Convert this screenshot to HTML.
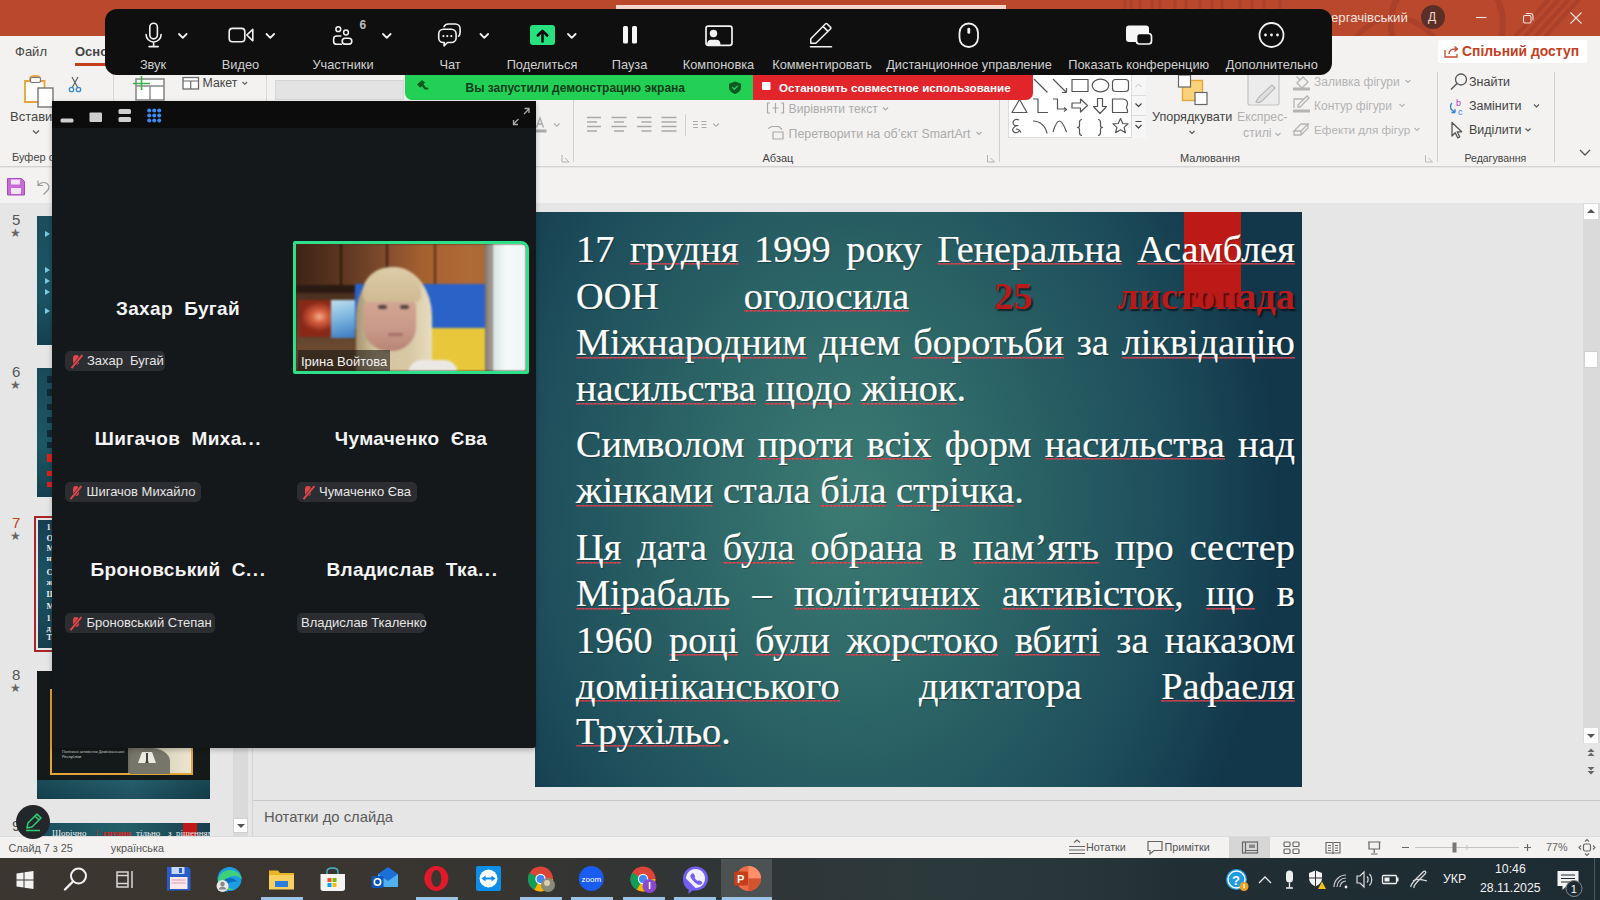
<!DOCTYPE html>
<html><head><meta charset="utf-8">
<style>
*{margin:0;padding:0;box-sizing:border-box}
html,body{width:1600px;height:900px;overflow:hidden;background:#e6e6e6;font-family:"Liberation Sans",sans-serif}
.a{position:absolute}
.t{position:absolute;white-space:pre;line-height:1}
svg{position:absolute;overflow:visible}

.sl{position:absolute;left:576px;width:719px;height:38px;font-family:"Liberation Serif",serif;font-size:38.3px;line-height:38px;color:#fff;white-space:pre;text-shadow:1px 1px 1px rgba(0,0,0,.35);-webkit-text-stroke:.22px #fff}
.sl.j{display:flex;justify-content:space-between}
.u{background:repeating-linear-gradient(90deg,#e0303c 0 2px,rgba(200,90,110,.75) 2px 4px) 0 33.5px/100% 1.6px no-repeat}
.sl span{display:inline-block;height:38px}
.r{color:#b81b1b;font-weight:bold;text-shadow:2px 2px 1.5px rgba(0,0,0,.6);-webkit-text-stroke:0}
.zl{position:absolute;top:58px;width:0;display:flex;justify-content:center;white-space:pre;font-size:12.8px;line-height:13px;color:#cfcfcf}
.bn{position:absolute;width:0;display:flex;justify-content:center;white-space:pre;font-size:19px;font-weight:bold;line-height:20px;color:#f4f4f4;letter-spacing:.35px}
.bn i{font-style:normal;letter-spacing:1.6px}
.pill{position:absolute;height:20px;border-radius:5px;background:#2b2d30;color:#e6e6e6;font-size:13px;line-height:20px;white-space:pre;padding-left:22px}
.mm{position:absolute;left:4px;top:3px;width:14px;height:14px}
.mm:before{content:"";position:absolute;left:4px;top:1px;width:6px;height:10px;border-radius:3px;background:#e0474c}
.mm:after{content:"";position:absolute;left:6.5px;top:-1px;width:1.6px;height:17px;background:#e0474c;transform:rotate(40deg);box-shadow:0 0 0 .6px #2b2d30}
.tn{position:absolute;left:12px;font-size:15px;line-height:15px;color:#555}
.st{position:absolute;left:10px;font-size:12px;line-height:12px;color:#666}
</style></head><body>
<!-- ============ TITLE BAR ============ -->
<div class="a" style="left:0;top:0;width:1600px;height:36px;background:#b9482d"></div>

<!-- ============ RIBBON ============ -->
<div class="a" style="left:0;top:36px;width:1600px;height:131px;background:#f3f2f1;border-bottom:1px solid #d4d3d2"></div>
<!-- QAT row -->
<div class="a" style="left:0;top:168px;width:1600px;height:35px;background:#f3f2f1"></div>

<!-- title decorations -->
<svg width="1600" height="36" style="left:0;top:0;overflow:hidden" fill="none" stroke="#ab412a" stroke-width="6">
 <circle cx="1447" cy="24" r="56"/>
 <circle cx="1395" cy="66" r="48" stroke-width="5"/>
 <path d="M1512 40l40-44M1522 40l40-44M1532 40l40-44M1542 40l40-44" stroke-width="4"/>
 <path d="M1125 0v36M1131 0v36M1140 0v36M1152 0v36M1160 0v36M1175 0v36M1186 0v36M1200 0v36M1212 0v36M1222 0v36M1240 0v36M1252 0v36M1264 0v36M1280 0v36" stroke-width="3"/>
</svg>
<div class="a" style="left:616px;top:5px;width:390px;height:4px;background:#f4d6cc"></div>
<div class="t" style="left:1331px;top:11px;font-size:13.2px;color:#f6e4de">ергачівський</div>
<div class="a" style="left:1421px;top:5px;width:24px;height:24px;border-radius:50%;background:#5c2f26"></div>
<div class="t" style="left:1428px;top:11px;font-size:12px;color:#efd9d2">Д</div>
<svg width="1600" height="36" style="left:0;top:0" fill="none" stroke="#f7e3dd" stroke-width="1.1">
 <path d="M1476 17.5h10.5"/>
 <rect x="1523.5" y="15.5" width="7.5" height="7.5" rx="1.5"/><path d="M1526 13.5h4.5c1.5 0 2.5 1 2.5 2.5v4.5"/>
 <path d="M1570.5 12.5l11 11M1581.5 12.5l-11 11"/>
</svg>
<!-- tabs -->
<div class="t" style="left:15px;top:45px;font-size:13px;color:#444">Файл</div>
<div class="t" style="left:75px;top:45px;font-size:13px;font-weight:bold;color:#444">Основне</div>
<div class="a" style="left:75px;top:63px;width:58px;height:2.5px;background:#c43e1c"></div>
<!-- share button -->
<div class="a" style="left:1438px;top:40px;width:149px;height:23px;background:#fff;border-radius:2px"></div>
<svg width="1600" height="80" style="left:0;top:0" fill="none" stroke="#c84a2e" stroke-width="1.3">
 <path d="M1445 50v7h12v-3M1449 54c0-3 2.5-5 6-5h2.5M1454.5 46.5l3 2.5-3 2.5"/>
</svg>
<div class="t" style="left:1462px;top:45px;font-size:13.9px;font-weight:bold;color:#c4401f">Спільний доступ</div>
<!-- separators -->
<div class="a" style="left:113px;top:72px;width:1px;height:90px;background:#d8d8d8"></div>
<div class="a" style="left:266px;top:72px;width:1px;height:90px;background:#d8d8d8"></div>
<div class="a" style="left:573px;top:100px;width:1px;height:62px;background:#d0d0d0"></div>
<div class="a" style="left:998.5px;top:100px;width:1px;height:62px;background:#d0d0d0"></div>
<div class="a" style="left:1437px;top:72px;width:1px;height:90px;background:#d0d0d0"></div>
<div class="a" style="left:1554px;top:72px;width:1px;height:90px;background:#d0d0d0"></div>
<div class="a" style="left:684.5px;top:114px;width:1px;height:22px;background:#d0d0d0"></div>
<!-- clipboard -->
<svg width="300" height="170" style="left:0;top:0">
 <path d="M25 81h5v-2.5c0-1.5 1.5-2.5 5-2.5s5 1 5 2.5V81h4.5v21H25z" fill="#fff" stroke="#e8a33a" stroke-width="1.8"/>
 <rect x="30.5" y="77.5" width="10" height="5" rx="1.5" fill="#fff" stroke="#777" stroke-width="1.2"/>
 <rect x="38" y="88" width="15" height="19" fill="#fff" stroke="#6a6a6a" stroke-width="1.3"/>
 <path d="M72 77l6 11M78 77l-6 11" stroke="#555" stroke-width="1.1"/>
 <circle cx="71.5" cy="89.5" r="2.2" fill="none" stroke="#3a8ad0" stroke-width="1.3"/><circle cx="78.5" cy="89.5" r="2.2" fill="none" stroke="#3a8ad0" stroke-width="1.3"/>
 <!-- new slide -->
 <rect x="136" y="79" width="28" height="21" fill="#fff" stroke="#8a8a8a" stroke-width="1.6"/>
 <path d="M136 86h28M150 86v14" stroke="#8a8a8a" stroke-width="1.4"/>
 <path d="M133 83.5h17M141.5 76v14" stroke="#3bb04a" stroke-width="1.6"/>
 <rect x="183" y="77.5" width="15.5" height="11.5" fill="#fff" stroke="#6a6a6a" stroke-width="1.3"/>
 <path d="M183 81h15.5M190.7 81v8" stroke="#6a6a6a" stroke-width="1.2"/>
 <path d="M242.5 82l2.3 2.3 2.3-2.3" stroke="#555" stroke-width="1.1" fill="none"/>
 <path d="M33 130.5l3 3 3-3" stroke="#555" stroke-width="1.2" fill="none"/>
</svg>
<div class="t" style="left:10px;top:110px;font-size:13px;color:#444">Вставити</div>
<div class="t" style="left:12px;top:152px;font-size:11px;color:#444">Буфер обміну</div>
<div class="t" style="left:202.5px;top:77px;font-size:12.3px;color:#444">Макет</div>
<div class="a" style="left:275px;top:80px;width:129px;height:20px;background:#e3e3e3;border:1px solid #d6d6d6"></div>
<!-- font / paragraph (disabled grey) -->
<svg width="1600" height="170" style="left:0;top:0" fill="none" stroke="#a9a9a9" stroke-width="1.6">
 <path d="M536.5 127.5l3.5-9.5 3.5 9.5M537.8 124h4.5" stroke-width="1.3"/>
 <rect x="536" y="129.5" width="10.5" height="3" fill="#a9a9a9" stroke="none"/>
 <path d="M554 123.5l2.8 2.8 2.8-2.8" stroke-width="1.1"/>
 <path d="M562 155v7h7M565 158l4 4" stroke-width=".9"/>
 <path d="M587 117.5h14M587 122h10M587 126.5h14M587 131h10"/>
 <path d="M611.5 117.5h15M614 122h10M611.5 126.5h15M614 131h10"/>
 <path d="M637 117.5h14.5M641.5 122h10M637 126.5h14.5M641.5 131h10"/>
 <path d="M661.5 117.5h15M661.5 122h15M661.5 126.5h15M661.5 131h15"/>
 <path d="M693 121.5h5M693 124.5h5M693 127.5h5M701.5 121.5h5M701.5 124.5h5M701.5 127.5h5" stroke-width="1.1"/>
 <path d="M713.3 123.5l2.8 2.8 2.8-2.8" stroke-width="1.1"/>
 <path d="M770 103h-2.5v10h2.5M781 103h2.5v10H781M775.5 103v10M772.5 108h6" stroke-width="1.2"/>
 <path d="M883 107.5l2.5 2.5 2.5-2.5" stroke-width="1.1"/>
 <path d="M768 128.5l4-2h7l3 3M773 132h10v7h-10z" stroke-width="1.2"/>
 <path d="M976.5 132l2.5 2.5 2.5-2.5" stroke-width="1.1"/>
 <path d="M987.5 155v7h7M990.5 158l4 4" stroke-width=".9"/>
</svg>
<div class="t" style="left:788.5px;top:103px;font-size:12.2px;color:#ababab">Вирівняти текст</div>
<div class="t" style="left:788.5px;top:128px;font-size:12.4px;color:#ababab">Перетворити на об’єкт SmartArt</div>
<div class="t" style="left:762.5px;top:153px;font-size:11px;color:#444">Абзац</div>
<!-- shapes gallery -->
<div class="a" style="left:1008px;top:72px;width:138px;height:66px;background:#fff;border:1px solid #dcdcdc"></div>
<div class="a" style="left:1131px;top:72px;width:15px;height:66px;background:#f6f6f6;border-left:1px solid #dcdcdc"></div>
<div class="a" style="left:1131px;top:94.5px;width:15px;height:1px;background:#dcdcdc"></div>
<div class="a" style="left:1131px;top:114.5px;width:15px;height:1px;background:#dcdcdc"></div>
<svg width="1600" height="170" style="left:0;top:0" fill="none" stroke="#555" stroke-width="1.2" stroke-linejoin="round">
 <path d="M1034 79l13.5 13.5M1053 79l13 13M1066.5 92.5v-4.5M1066.5 92.5h-4.5"/>
 <rect x="1072" y="79.5" width="16" height="12"/>
 <ellipse cx="1100.5" cy="85.5" rx="8.3" ry="6.3"/>
 <rect x="1112.5" y="79.5" width="16" height="12" rx="3"/>
 <path d="M1012 112.5l7.5-13 7.5 13z"/>
 <path d="M1033 99h5v13.5h10M1053 99h4.5v10h9M1064 107.5l2.5 2-2.5 2"/>
 <path d="M1072 103h8.5v-4l7 6.5-7 6.5v-4h-8.5z"/>
 <path d="M1097.5 98.5h5v8h4l-6.5 7-6.5-7h4z"/>
 <path d="M1112.5 99h9.5c3.5 0 5.5 2 5.5 4.5 0 2-1 3-1 4 0 1 1 2 1 3v2h-15z"/>
 <path d="M1019 120c-3-1.5-6 0-6 3 0 2 2 3 5 2.5-4 1-6 3-5 5.5 1 2.5 5 2 7-.5M1016 129c2 0 4 1 5 3.5"/>
 <path d="M1033 121c7 0 13 5.5 14 12.5"/>
 <path d="M1053 132c2-7 4-11 6.5-11s4.5 4 7 11"/>
 <path d="M1082 119.5c-2 0-2.5 1-2.5 3v3c0 1.2-.8 2-2 2 1.2 0 2 .8 2 2v3c0 2 .5 3 2.5 3"/>
 <path d="M1098 119.5c2 0 2.5 1 2.5 3v3c0 1.2.8 2 2 2-1.2 0-2 .8-2 2v3c0 2-.5 3-2.5 3"/>
 <path d="M1120.5 118.5l2.3 5 5.3.4-4 3.5 1.3 5.3-4.9-2.9-4.9 2.9 1.3-5.3-4-3.5 5.3-.4z"/>
 <path d="M1135.5 87l3-3 3 3" stroke="#c0c0c0" stroke-width="1"/>
 <path d="M1135.5 103.5l3 3 3-3M1135.5 121.5h6M1135.5 125l3 3 3-3" stroke="#444" stroke-width="1.2"/>
</svg>
<!-- arrange -->
<svg width="1600" height="170" style="left:0;top:0">
 <rect x="1182.5" y="80.5" width="20" height="20" fill="#fbd27a" stroke="#e5a43c" stroke-width="1.4"/>
 <rect x="1178.5" y="75" width="12" height="12" fill="#fff" stroke="#666" stroke-width="1.2"/>
 <rect x="1195" y="92.5" width="12" height="12" fill="#fff" stroke="#666" stroke-width="1.2"/>
 <path d="M1189.5 131l2.5 2.5 2.5-2.5" stroke="#555" stroke-width="1.1" fill="none"/>
 <rect x="1248" y="72" width="31" height="33" rx="2" fill="#ececec" stroke="#c4c4c4" stroke-width="1.2"/>
 <path d="M1275 88l-12 12c-2 2-5 3-7 2 1-2 2-4 4-6l12-11z" fill="#e0e0e0" stroke="#b8b8b8" stroke-width="1.2"/>
 <path d="M1275.5 133l2.5 2.5 2.5-2.5" stroke="#b0b0b0" stroke-width="1.1" fill="none"/>
</svg>
<div class="t" style="left:1152px;top:111px;font-size:12.6px;color:#444">Упорядкувати</div>
<div class="t" style="left:1237px;top:111px;font-size:12.3px;color:#b0b0b0">Експрес-</div>
<div class="t" style="left:1243px;top:127px;font-size:12.3px;color:#b0b0b0">стилі</div>
<div class="t" style="left:1180px;top:153px;font-size:11px;color:#444">Малювання</div>
<!-- shape fill etc -->
<svg width="1600" height="170" style="left:0;top:0" fill="none" stroke="#b4b4b4" stroke-width="1.3">
 <path d="M1297 83l6-6 5 5-6 6zM1300 80l-3.5-3.5"/>
 <rect x="1293" y="87.5" width="17" height="3" fill="#b4b4b4" stroke="none"/>
 <path d="M1294 108v-9h10M1298 105l9-9 2 2-9 9h-2z"/>
 <rect x="1293" y="109.5" width="17" height="3" fill="#b4b4b4" stroke="none"/>
 <path d="M1294 131l7-7h7l-7 7zM1294 131v4h7l7-7v-4M1301 131v4"/>
 <path d="M1405.5 80l2.5 2.5 2.5-2.5M1399.5 104l2.5 2.5 2.5-2.5M1414.5 128l2.5 2.5 2.5-2.5" stroke-width="1.1"/>
 <path d="M1425.5 155v7h7M1428.5 158l4 4" stroke-width=".9"/>
</svg>
<div class="t" style="left:1314px;top:76px;font-size:12px;color:#b4b4b4">Заливка фігури</div>
<div class="t" style="left:1314px;top:100px;font-size:12px;color:#b4b4b4">Контур фігури</div>
<div class="t" style="left:1314px;top:124px;font-size:11.7px;color:#b4b4b4">Ефекти для фігур</div>
<!-- editing -->
<svg width="1600" height="170" style="left:0;top:0" fill="none" stroke-width="1.3">
 <circle cx="1461" cy="79.5" r="5.5" stroke="#555"/><path d="M1457 83.5l-6 6" stroke="#555" stroke-width="1.5"/>
 <path d="M1452 103c-2 2-2 5 0 7l3 2.5M1455 112.5h-3.5M1455 112.5v-3.5" stroke="#2c7fd0"/>
 <text x="1456" y="106" font-size="9" fill="#b43fc0" stroke="none" font-family="Liberation Sans">b</text>
 <text x="1458" y="115" font-size="9" fill="#2c7fd0" stroke="none" font-family="Liberation Sans">c</text>
 <path d="M1452 122.5v13.5l3.2-3.2 2.5 5 2-1-2.5-5h4.5z" stroke="#555" stroke-linejoin="round"/>
 <path d="M1534 104.5l2.5 2.5 2.5-2.5M1525.5 128.5l2.5 2.5 2.5-2.5" stroke="#555" stroke-width="1.1"/>
 <path d="M1580 150l5 5 5-5" stroke="#555" stroke-width="1.3"/>
</svg>
<div class="t" style="left:1469px;top:76px;font-size:12.5px;color:#444">Знайти</div>
<div class="t" style="left:1469px;top:100px;font-size:12.5px;color:#444">Замінити</div>
<div class="t" style="left:1469px;top:124px;font-size:12.5px;color:#444">Виділити</div>
<div class="t" style="left:1464.5px;top:153px;font-size:10.5px;color:#444">Редагування</div>
<!-- QAT -->
<svg width="300" height="210" style="left:0;top:0">
 <path d="M7.5 178.5h14l3 3v13.5h-17z" fill="#c86bd8" stroke="#a84cc0" stroke-width="1"/>
 <rect x="11" y="179.5" width="9" height="5" fill="#f4e4f8"/>
 <rect x="11" y="188" width="10" height="6" fill="#f4e4f8"/>
 <path d="M38 180.5v5h5M38.5 185c2.5-3 7-3.5 9.5-.5 1.5 2 1 4.5-1 6.5l-3.5 3.5" stroke="#999" stroke-width="1.2" fill="none"/>
</svg>
<!-- thumbnails panel -->
<div class="a" style="left:0;top:203px;width:252px;height:633px;background:#e6e6e6;overflow:hidden">
 <div class="a" style="left:233px;top:0;width:15px;height:633px;background:#dadada"></div>
 <div class="a" style="left:233px;top:615px;width:15px;height:15px;background:#fff;border:1px solid #d0d0d0"></div>
 <div class="a" style="left:237px;top:621px;width:0;height:0;border-left:4px solid transparent;border-right:4px solid transparent;border-top:4px solid #555"></div>
 <div class="tn" style="top:9px">5</div><div class="st" style="top:24px">★</div>
 <div class="a" style="left:37px;top:13px;width:173px;height:129px;background:linear-gradient(180deg,#1b4d5e,#1a5565 60%,#164050)"></div>
 <div class="a" style="left:45px;top:28px;border-left:5px solid #7ec8e0;border-top:3px solid transparent;border-bottom:3px solid transparent"></div>
 <div class="a" style="left:45px;top:64px;border-left:5px solid #7ec8e0;border-top:3px solid transparent;border-bottom:3px solid transparent"></div>
 <div class="a" style="left:45px;top:75px;border-left:5px solid #7ec8e0;border-top:3px solid transparent;border-bottom:3px solid transparent"></div>
 <div class="a" style="left:45px;top:86px;border-left:5px solid #7ec8e0;border-top:3px solid transparent;border-bottom:3px solid transparent"></div>
 <div class="a" style="left:45px;top:105px;border-left:5px solid #7ec8e0;border-top:3px solid transparent;border-bottom:3px solid transparent"></div>
 <div class="tn" style="top:161px">6</div><div class="st" style="top:176px">★</div>
 <div class="a" style="left:37px;top:165px;width:173px;height:129px;background:linear-gradient(180deg,#1a4a5a,#1c5664 60%,#153f4e)"></div>
 <div class="a" style="left:47px;top:251px;width:5px;height:8px;background:#e02020"></div>
 <div class="a" style="left:47px;top:268px;width:5px;height:5px;background:#e02020"></div>
 <div class="a" style="left:47px;top:279px;width:5px;height:5px;background:#e02020"></div>
 <div class="a" style="left:47px;top:173px;width:5px;height:7px;background:#0e2a36"></div>
 <div class="a" style="left:47px;top:186px;width:5px;height:7px;background:#0e2a36"></div>
 <div class="a" style="left:47px;top:201px;width:5px;height:6px;background:#0e2a36"></div>
 <div class="a" style="left:47px;top:214px;width:5px;height:6px;background:#0e2a36"></div>
 <div class="a" style="left:47px;top:227px;width:5px;height:7px;background:#0e2a36"></div>
 <div class="a" style="left:47px;top:239px;width:5px;height:6px;background:#0e2a36"></div>
 <div class="tn" style="top:312px;color:#c43e1c">7</div><div class="st" style="top:327px">★</div>
 <div class="a" style="left:34px;top:313px;width:179px;height:136px;border:2px solid #a4262c"></div>
 <div class="a" style="left:38px;top:317px;width:171px;height:128px;background:linear-gradient(180deg,#163f52,#1d5462 50%,#163e4e)"></div>
 <div class="t" style="left:46.5px;top:319.5px;font-family:'Liberation Serif';font-size:8.5px;font-weight:bold;color:#f0f0f0">1</div><div class="t" style="left:46.5px;top:331.2px;font-family:'Liberation Serif';font-size:8.5px;font-weight:bold;color:#f0f0f0">О</div><div class="t" style="left:46.5px;top:341.2px;font-family:'Liberation Serif';font-size:8.5px;font-weight:bold;color:#f0f0f0">М</div><div class="t" style="left:46.5px;top:351.2px;font-family:'Liberation Serif';font-size:8.5px;font-weight:bold;color:#f0f0f0">н</div><div class="t" style="left:46.5px;top:364.5px;font-family:'Liberation Serif';font-size:8.5px;font-weight:bold;color:#f0f0f0">С</div><div class="t" style="left:46.5px;top:374.5px;font-family:'Liberation Serif';font-size:8.5px;font-weight:bold;color:#f0f0f0">ж</div><div class="t" style="left:46.5px;top:387.0px;font-family:'Liberation Serif';font-size:8.5px;font-weight:bold;color:#f0f0f0">Ш</div><div class="t" style="left:46.5px;top:398.5px;font-family:'Liberation Serif';font-size:8.5px;font-weight:bold;color:#f0f0f0">М</div><div class="t" style="left:46.5px;top:410.5px;font-family:'Liberation Serif';font-size:8.5px;font-weight:bold;color:#f0f0f0">1</div><div class="t" style="left:46.5px;top:420.5px;font-family:'Liberation Serif';font-size:8.5px;font-weight:bold;color:#f0f0f0">д</div><div class="t" style="left:46.5px;top:429.5px;font-family:'Liberation Serif';font-size:8.5px;font-weight:bold;color:#f0f0f0">Т</div>
 <div class="tn" style="top:464px">8</div><div class="st" style="top:479px">★</div>
 <div class="a" style="left:37px;top:468px;width:173px;height:128px;background:#141a19;overflow:hidden">
  <div class="a" style="left:0;top:109px;width:173px;height:19px;background:linear-gradient(180deg,#1d5866,#174a58)"></div>
  <div class="a" style="left:0;top:109px;width:173px;height:19px;background:linear-gradient(90deg,rgba(0,0,0,.15),rgba(255,255,255,.04) 55%,rgba(0,0,0,.2))"></div>
  <div class="a" style="left:13px;top:18px;width:143px;height:86px;border:2px solid #e3a43a"></div>
  <div class="t" style="left:25px;top:79.5px;font-size:3.8px;color:#d0d0d0">Політичні активістки Домініканської</div>
  <div class="t" style="left:25px;top:85px;font-size:3.8px;color:#d0d0d0">Республіки</div>
  <div class="a" style="left:91px;top:77px;width:63px;height:25px;background:linear-gradient(90deg,#6e6c62,#8a887a 30%,#d8d4bc 55%,#ece6d0)"></div>
  <div class="a" style="left:93px;top:77px;width:40px;height:26px;border-radius:50% 50% 0 0;background:#77766a"></div>
  <div class="a" style="left:103px;top:81px;width:7px;height:11px;background:#ecebe0;transform:skewX(-20deg)"></div>
  <div class="a" style="left:110px;top:81px;width:7px;height:11px;background:#ecebe0;transform:skewX(20deg)"></div>
  <div class="a" style="left:109px;top:82px;width:2px;height:10px;background:#444"></div>
 </div>
 <div class="tn" style="top:615px">9</div>
 <div class="a" style="left:37px;top:620px;width:173px;height:20px;background:linear-gradient(90deg,#1b4d5e,#246068 50%,#173f4e)"></div>
 <div class="a" style="left:183px;top:620px;width:14px;height:13px;background:#c01818"></div>
 <div class="t" style="left:52px;top:626px;font-family:'Liberation Serif';font-size:9px;color:#e8eeee">Щорічно</div>
 <div class="t" style="left:96px;top:626px;font-family:'Liberation Serif';font-size:9px;color:#e02020">|</div>
 <div class="t" style="left:103px;top:626px;font-family:'Liberation Serif';font-size:9px;font-weight:bold;color:#e02020">грудня</div>
 <div class="t" style="left:136px;top:626px;font-family:'Liberation Serif';font-size:9px;color:#e8eeee">тільно</div>
 <div class="t" style="left:168px;top:626px;font-family:'Liberation Serif';font-size:9px;color:#e8eeee">з</div>
 <div class="t" style="left:176px;top:626px;font-family:'Liberation Serif';font-size:9px;color:#e8eeee">рішенням</div>
</div>
<!-- main edit area -->
<div class="a" style="left:252px;top:203px;width:1348px;height:633px;background:#e6e6e6;border-left:1px solid #d4d4d4"></div>
<div class="a" style="left:1583px;top:203px;width:17px;height:540px;background:#dadada"></div>
<div class="a" style="left:1584px;top:204px;width:14px;height:15px;background:#fff"></div>
<div class="a" style="left:1587px;top:209px;width:0;height:0;border-left:4px solid transparent;border-right:4px solid transparent;border-bottom:4px solid #555"></div>
<div class="a" style="left:1584px;top:351px;width:14px;height:17px;background:#fff;border:1px solid #d0d0d0"></div>
<div class="a" style="left:1584px;top:728px;width:14px;height:15px;background:#fff"></div>
<div class="a" style="left:1587px;top:734px;width:0;height:0;border-left:4px solid transparent;border-right:4px solid transparent;border-top:4px solid #555"></div>
<svg width="1600" height="900" style="left:0;top:0" fill="#666">
 <path d="M1587.5 752l3.5-3.5 3.5 3.5zM1587.5 756l3.5-3.5 3.5 3.5z"/>
 <path d="M1587.5 767l3.5 3.5 3.5-3.5zM1587.5 771l3.5 3.5 3.5-3.5z"/>
</svg>
<div class="a" style="left:253px;top:800px;width:1347px;height:1px;background:#c8c8c8"></div>
<div class="t" style="left:264px;top:810px;font-size:14.8px;color:#5a5a5a">Нотатки до слайда</div>
<!-- status bar -->
<div class="a" style="left:0;top:836px;width:1600px;height:22px;background:#f3f2f1;border-top:1px solid #dcdcdc"></div>
<div class="t" style="left:8.4px;top:843px;font-size:10.8px;color:#555">Слайд 7 з 25</div>
<div class="t" style="left:110.8px;top:843px;font-size:10.8px;color:#555">українська</div>
<div class="a" style="left:1229px;top:837px;width:41px;height:21px;background:#d6d6d6"></div>
<svg width="1600" height="900" style="left:0;top:0" fill="none" stroke="#666" stroke-width="1.2">
 <path d="M1069 846.5h16M1069 850h16M1069 853.5h16M1074 842.5l3-2.5 3 2.5"/>
 <path d="M1148 841.5h14v9h-8l-4 3.5v-3.5h-2z"/>
 <rect x="1242.5" y="842" width="15" height="11"/><path d="M1245.5 842v11M1245.5 850.5h12"/><rect x="1249" y="844.5" width="6" height="3.5" fill="#888" stroke="none"/>
 <rect x="1284" y="842" width="6" height="4.5" rx="1"/><rect x="1293" y="842" width="6" height="4.5" rx="1"/><rect x="1284" y="849" width="6" height="4.5" rx="1"/><rect x="1293" y="849" width="6" height="4.5" rx="1"/>
 <path d="M1326 842.5h6c.5 0 1 .4 1 1 0-.6.5-1 1-1h6v10.5h-6c-.5 0-1 .4-1 1 0-.6-.5-1-1-1h-6z M1333 843.5v10.5M1328 845.5h3M1328 848h3M1328 850.5h3M1335 845.5h3M1335 848h3M1335 850.5h3" stroke-width="1.1"/>
 <path d="M1368 842h12.5M1369 842v7h10.5v-7M1374.2 849v4M1371 854h6.5"/>
 <path d="M1402 847.5h7M1524 847.5h7M1527.5 844v7"/>
 <path d="M1415 847.5h104" stroke="#c4c4c4" stroke-width="1"/>
 <path d="M1467 845v5" stroke="#c4c4c4" stroke-width="1"/>
 <rect x="1452.5" y="842.5" width="4" height="10" fill="#777" stroke="none"/>
 <rect x="1583.5" y="844" width="7" height="7" rx="1.5"/><path d="M1585 841.5l2-2 2 2M1585 853.5l2 2 2-2M1581 845.5l-2 2 2 2M1593 845.5l2 2-2 2" stroke-width="1.1"/>
</svg>
<div class="t" style="left:1086px;top:842px;font-size:10.8px;color:#555">Нотатки</div>
<div class="t" style="left:1164.4px;top:842px;font-size:10.8px;color:#555">Примітки</div>
<div class="t" style="left:1546px;top:842px;font-size:10.8px;color:#666">77%</div>
<!-- taskbar -->
<div class="a" style="left:0;top:858px;width:1600px;height:42px;background:linear-gradient(90deg,#3c3630 0%,#3a3530 22%,#353532 34%,#2f3536 46%,#2c393b 58%,#2a373a 66%,#212f35 74%,#1d2b32 100%)"></div>
<div class="a" style="left:721px;top:859px;width:51px;height:41px;background:rgba(255,255,255,.14)"></div>
<div class="a" style="left:261px;top:897px;width:42px;height:3px;background:#9cc3e4"></div>
<div class="a" style="left:416px;top:897px;width:42px;height:3px;background:#9cc3e4"></div>
<div class="a" style="left:519.5px;top:897px;width:42px;height:3px;background:#9cc3e4"></div>
<div class="a" style="left:571px;top:897px;width:42px;height:3px;background:#9cc3e4"></div>
<div class="a" style="left:622.5px;top:897px;width:42px;height:3px;background:#9cc3e4"></div>
<div class="a" style="left:674px;top:897px;width:42px;height:3px;background:#9cc3e4"></div>
<div class="a" style="left:722px;top:897px;width:50px;height:3px;background:#9cc3e4"></div>
<svg width="1600" height="900" style="left:0;top:0">
 <!-- windows logo -->
 <path d="M16.5 873.5l7-1v7h-7zM24.5 872.3l9-1.3v8.5h-9zM16.5 880.5h7v7l-7-1zM24.5 880.5h9V889l-9-1.3z" fill="#f2f2f2"/>
 <!-- search -->
 <circle cx="78.5" cy="876" r="7.5" fill="none" stroke="#f2f2f2" stroke-width="2"/>
 <path d="M73 881.5l-8 8" stroke="#f2f2f2" stroke-width="2.4" stroke-linecap="round"/>
 <!-- task view -->
 <path d="M117 872h11v15h-11z M117 875.5h11M117 883.5h11" fill="none" stroke="#d8d8d8" stroke-width="1.5"/>
 <path d="M132 871v17" stroke="#d8d8d8" stroke-width="1.5"/>
 <!-- floppy -->
 <path d="M167 867h21l2.5 2.5v21h-23.5z" fill="#2a5cc8"/>
 <rect x="171.5" y="867" width="13" height="7" fill="#c8d8f0"/><rect x="179" y="868" width="3" height="5" fill="#2a5cc8"/>
 <rect x="170" y="877" width="17.5" height="12" fill="#f8e8ec"/>
 <path d="M171.5 880h14M171.5 883h14" stroke="#e898a8" stroke-width="1"/>
 <!-- edge -->
 <circle cx="229.5" cy="879" r="12" fill="#1b9de2"/>
 <path d="M218 882c0-7 5-12 12-12 6 0 11 4 12 9-2-2-5-3-8-3-5 0-8 3-8 6 0 4 3 7 8 7-2 1-3 1-5 1-6 0-11-3-11-8z" fill="#3fd07a"/>
 <path d="M222 884c1-4 4-6 8-6 3 0 6 2 7 4-7-1-11 2-11 6 0 2 1 4 3 5-4-1-7-4-7-9z" fill="#0c6cbf"/>
 <circle cx="222.5" cy="886" r="6" fill="#e8e8e8"/><circle cx="222.5" cy="884" r="2.2" fill="#888"/><path d="M218.5 889.5c1-2 2.5-3 4-3s3 1 4 3" fill="#888"/>
 <!-- explorer -->
 <path d="M269 870.5h9l2 2.5h14v16h-25z" fill="#e8b526"/>
 <rect x="269" y="875" width="25" height="14.5" fill="#f8d060"/>
 <rect x="275" y="881" width="13" height="6" fill="#2b7de0"/>
 <!-- store -->
 <path d="M320.5 874h24.5v14.5c0 1.5-1 2.5-2.5 2.5h-19.5c-1.5 0-2.5-1-2.5-2.5z" fill="#f4f4f4"/>
 <path d="M327 874v-2.5c0-2 2-3.5 5.5-3.5s5.5 1.5 5.5 3.5v2.5" fill="none" stroke="#46b2c8" stroke-width="1.4"/>
 <rect x="327.5" y="878" width="4" height="4" fill="#f25022"/><rect x="332.5" y="878" width="4" height="4" fill="#7fba00"/>
 <rect x="327.5" y="883" width="4" height="4" fill="#00a4ef"/><rect x="332.5" y="883" width="4" height="4" fill="#ffb900"/>
 <!-- outlook -->
 <path d="M378 874l10-7 10 7v13h-20z" fill="#1d6fd8"/>
 <path d="M378 874l10 7 10-7v13h-20z" fill="#50b0f0"/>
 <rect x="371.5" y="876" width="12" height="12" rx="1.5" fill="#0a56b8"/>
 <circle cx="377.5" cy="882" r="3.2" fill="none" stroke="#fff" stroke-width="1.6"/>
 <!-- opera -->
 <ellipse cx="436.3" cy="878.5" rx="12" ry="12.5" fill="#e01a2a"/>
 <ellipse cx="436.3" cy="878.5" rx="5" ry="8.5" fill="#3a3531"/>
 <!-- teamviewer -->
 <rect x="476" y="866" width="25" height="25" rx="2" fill="#0e8ee8"/>
 <circle cx="488.5" cy="878.5" r="9" fill="#fff"/>
 <path d="M481.5 878.5l4-3v2h6v-2l4 3-4 3v-2h-6v2z" fill="#0e8ee8"/>
 <!-- chrome -->
 <circle cx="540.5" cy="879" r="12.5" fill="#db4437"/>
 <path d="M540.5 879l-10.8-6.2A12.5 12.5 0 0 0 534.3 890z" fill="#0f9d58"/>
 <path d="M540.5 879h12.5a12.5 12.5 0 0 1-18.7 10.8z" fill="#f4b400"/>
 <circle cx="540.5" cy="879" r="5.2" fill="#fff"/><circle cx="540.5" cy="879" r="4" fill="#4285f4"/>
 <circle cx="548" cy="885" r="7" fill="#8a8a78"/><circle cx="547" cy="883" r="3" fill="#d8d0b0"/>
 <!-- zoom -->
 <circle cx="591.3" cy="878.5" r="12.5" fill="#1a5cf0"/>
 <text x="581.5" y="881.5" font-size="8" fill="#fff" font-family="Liberation Sans">zoom</text>
 <!-- chrome 2 -->
 <circle cx="643" cy="879" r="12.5" fill="#db4437"/>
 <path d="M643 879l-10.8-6.2A12.5 12.5 0 0 0 636.8 890z" fill="#0f9d58"/>
 <path d="M643 879h12.5a12.5 12.5 0 0 1-18.7 10.8z" fill="#f4b400"/>
 <circle cx="643" cy="879" r="5.2" fill="#fff"/><circle cx="643" cy="879" r="4" fill="#4285f4"/>
 <circle cx="649.5" cy="886" r="7" fill="#8a4ad0"/><rect x="648.8" y="882" width="1.6" height="7" fill="#fff"/>
 <!-- viber -->
 <path d="M683 878.5c0-7 5.5-12 12.5-12s12.5 5 12.5 12-5.5 12-12.5 12h-3l-4 3.5v-4.5c-3.5-2-5.5-6-5.5-11z" fill="#7360f2"/>
 <path d="M686 878.5c0-5.3 4.3-9.5 9.5-9.5s9.5 4.2 9.5 9.5-4.3 9.5-9.5 9.5" fill="#f4f0ff"/>
 <path d="M691.5 874c1-1 2-1 2.5 0l1 2c.3.7 0 1.2-.5 1.6.6 1.6 1.8 2.8 3.4 3.4.4-.5 1-.8 1.6-.5l2 1c1 .5 1 1.5 0 2.5-1.5 1.5-3.5 1-6-1s-4.5-4.5-5-6c-.3-1.2 0-2.2 1-3z" fill="#7360f2"/>
 <!-- powerpoint -->
 <circle cx="748.5" cy="878.5" r="12.5" fill="#ed6c47"/>
 <path d="M748.5 866a12.5 12.5 0 0 1 12.5 12.5h-12.5z" fill="#ff8f6b"/>
 <path d="M748.5 878.5h12.5a12.5 12.5 0 0 1-12.5 12.5z" fill="#d35230"/>
 <rect x="734" y="871.5" width="14" height="14" rx="1.5" fill="#c43e1c"/>
 <text x="737" y="883" font-size="11" font-weight="bold" fill="#fff" font-family="Liberation Sans">P</text>
 <!-- tray -->
 <circle cx="1236.5" cy="879.5" r="10.5" fill="#1d9be0"/><circle cx="1236.5" cy="879.5" r="8.5" fill="none" stroke="#fff" stroke-width="1.4"/>
 <text x="1232" y="885" font-size="13" font-weight="bold" fill="#fff" font-family="Liberation Sans">?</text>
 <circle cx="1244" cy="886.5" r="4.5" fill="#f0a020"/><rect x="1243.4" y="883.8" width="1.3" height="4.5" fill="#fff"/>
 <path d="M1259 883l6-6 6 6" fill="none" stroke="#e8e8e8" stroke-width="1.3"/>
 <rect x="1286" y="870.5" width="7" height="12" rx="3.5" fill="#eee"/>
 <path d="M1289.5 882.5v5M1286 888h7" stroke="#eee" stroke-width="1.3"/>
 <path d="M1309 873l6.5-2.5 6.5 2.5v5c0 4-3 7-6.5 8.5-3.5-1.5-6.5-4.5-6.5-8.5z" fill="#f4f4f4"/>
 <path d="M1315.5 870.5v16M1309 878h13" stroke="#2b2f33" stroke-width="1"/>
 <path d="M1318 889l4-7.5 4 7.5z" fill="#f0c020"/>
 <path d="M1334 887a12 12 0 0 1 12-12M1337 887a9 9 0 0 1 9-9M1340 887a6 6 0 0 1 6-6" fill="none" stroke="#ccc" stroke-width="1.2"/>
 <circle cx="1346" cy="887" r="1.4" fill="#eee"/>
 <path d="M1357 876h3l4-4v15l-4-4h-3z" fill="none" stroke="#ddd" stroke-width="1.2"/>
 <path d="M1367 876.5c1.5 1.5 1.5 4.5 0 6M1369.5 874c3 3 3 8.5 0 11.5" fill="none" stroke="#ddd" stroke-width="1.2"/>
 <rect x="1382.5" y="875.5" width="14" height="8" rx="1" fill="none" stroke="#eee" stroke-width="1.3"/>
 <rect x="1384.5" y="877.5" width="5" height="4" fill="#eee"/><rect x="1397" y="877.5" width="1.5" height="4" fill="#eee"/>
 <path d="M1411 887c-1-2 3-6 6-9l6-6c2-2 4 0 2 2l-6 6c-3 3-6 6-5 8" fill="none" stroke="#ddd" stroke-width="1.3"/>
 <path d="M1413 881c3-2 8-2 14 0" fill="none" stroke="#ddd" stroke-width="1.3"/>
 <!-- notification -->
 <path d="M1557.5 871h21v15h-12l-4 4v-4h-5z" fill="#f4f4f4"/>
 <path d="M1561 875h14M1561 878.5h14M1561 882h9" stroke="#1c2a31" stroke-width="1.2"/>
 <circle cx="1574" cy="888.5" r="8" fill="#1c2a31" stroke="#888" stroke-width="1"/>
 <text x="1570.8" y="893" font-size="11" fill="#fff" font-family="Liberation Sans">1</text>
 <path d="M1594.5 858v42" stroke="#555" stroke-width="1"/>
</svg>
<div class="t" style="left:1443px;top:873px;font-size:12.3px;color:#f2f2f2">УКР</div>
<div class="t" style="left:1495px;top:862.5px;font-size:12.3px;color:#f2f2f2">10:46</div>
<div class="t" style="left:1480px;top:881.5px;font-size:12.3px;color:#f2f2f2">28.11.2025</div>
<!-- zoom annotate button -->


<!-- ============ SLIDE ============ -->
<div class="a" id="slide" style="left:535px;top:212px;width:767px;height:575px;background:radial-gradient(ellipse 56% 98% at 41% 50%,#3c7b73 0%,#2c6566 38%,#1d4d5b 75%,#12374a 100%)"></div>

<div class="a" style="left:1184px;top:212px;width:57px;height:95px;background:#bd1a17"></div>
<div class="sl j" style="top:229.9px"><span>17</span><span class="u">грудня</span><span>1999</span><span>року</span><span class="u">Генеральна</span><span class="u">Асамблея</span></div>
<div class="sl j" style="top:276.5px"><span>ООН</span><span class="u">оголосила</span><span class="r">25</span><span class="r">листопада</span></div>
<div class="sl j" style="top:323.2px"><span class="u">Міжнародним</span><span>днем</span><span class="u">боротьби</span><span>за</span><span class="u">ліквідацію</span></div>
<div class="sl" style="top:369.2px"><span class="u">насильства</span> <span class="u">щодо</span> <span><span class="u">жінок</span>.</span></div>
<div class="sl j" style="top:424.9px"><span>Символом</span><span class="u">проти</span><span class="u">всіх</span><span>форм</span><span class="u">насильства</span><span>над</span></div>
<div class="sl" style="top:471.1px"><span class="u">жінками</span> <span>стала</span> <span class="u">біла</span> <span><span class="u">стрічка</span>.</span></div>
<div class="sl j" style="top:528.2px"><span class="u">Ця</span><span>дата</span><span class="u">була</span><span class="u">обрана</span><span>в</span><span class="u">пам’ять</span><span>про</span><span>сестер</span></div>
<div class="sl j" style="top:574.2px"><span class="u">Мірабаль</span><span>–</span><span class="u">політичних</span><span><span class="u">активісток</span>,</span><span class="u">що</span><span>в</span></div>
<div class="sl j" style="top:620.5px"><span>1960</span><span class="u">році</span><span class="u">були</span><span class="u">жорстоко</span><span class="u">вбиті</span><span>за</span><span>наказом</span></div>
<div class="sl j" style="top:666.5px"><span class="u">домініканського</span><span>диктатора</span><span class="u">Рафаеля</span></div>
<div class="sl" style="top:711.5px"><span><span class="u">Трухільо</span>.</span></div>

<!-- ============ ZOOM TOOLBAR ============ -->

<div class="a" style="left:105px;top:9px;width:1227px;height:66px;background:#0f0f0f;border-radius:12px"></div>
<svg width="1600" height="80" style="left:0;top:0" fill="none" stroke="#f2f2f2" stroke-width="1.6" stroke-linecap="round" stroke-linejoin="round">
 <!-- mic -->
 <rect x="149.8" y="23.3" width="7.6" height="15.6" rx="3.8"/>
 <path d="M146.1 34.5a7.5 7.5 0 0 0 15 0M153.6 42v4.6M149 46.6h9.2"/>
 <path d="M179 34l3.8 3.8 3.8-3.8" stroke-width="1.8"/>
 <!-- video -->
 <rect x="229.2" y="28.4" width="15.6" height="13.4" rx="3.3"/>
 <path d="M246.8 35l6-5.6v11.4z"/>
 <path d="M266.5 34l3.8 3.8 3.8-3.8" stroke-width="1.8"/>
 <!-- participants -->
 <circle cx="338.3" cy="29.2" r="2.4" stroke-width="1.5"/><circle cx="346" cy="32.5" r="2.4" stroke-width="1.5"/>
 <path d="M340.8 36h-4c-1.8 0-3.2 1.4-3.2 3.2v2c0 1.7 1.4 3.1 3.2 3.1h4.6" stroke-width="1.6"/>
 <rect x="342.2" y="38.3" width="9.6" height="5.8" rx="2.9" stroke-width="1.6"/>
 <path d="M383 34l3.8 3.8 3.8-3.8" stroke-width="1.8"/>
 <!-- chat -->
 <path d="M444 26.6c.8-1.6 2.4-2.6 4.3-2.6h7c2.7 0 4.8 2.1 4.8 4.8v3.6c0 1.6-.6 2.9-1.5 3.8"/>
 <path d="M444.3 42.5h-1c-2.6 0-4.6-2-4.6-4.6v-3.8c0-2.7 2.1-4.8 4.8-4.8h7.8c2.7 0 4.8 2.1 4.8 4.8v3.8c0 2.6-2.1 4.6-4.8 4.6h-3.8l-3.5 3.3z"/>
 <path d="M480.5 34l3.8 3.8 3.8-3.8" stroke-width="1.8"/>
 <path d="M568 34l3.8 3.8 3.8-3.8" stroke-width="1.8"/>
 <!-- layout -->
 <rect x="706" y="26.2" width="26" height="19.2" rx="2.3" stroke-width="1.7"/>
 <!-- pencil -->
 <path d="M810.8 43.3v-4.6l14.8-14.9c.4-.4 1-.4 1.4 0l3.6 3.6c.4.4.4 1 0 1.4l-14.8 14.5z M823 26.4l5 5" stroke-width="1.5"/>
 <path d="M810.5 46.8h21" stroke-width="1.5"/>
 <!-- mouse -->
 <rect x="959.5" y="23.5" width="18.5" height="23.5" rx="9.25" stroke-width="1.8"/>
 <!-- more -->
 <circle cx="1271.5" cy="35" r="12" stroke-width="1.8"/>
</svg>
<svg width="1600" height="80" style="left:0;top:0">
 <circle cx="443.4" cy="36.1" r="1.1" fill="#f2f2f2"/><circle cx="447.3" cy="36.1" r="1.1" fill="#f2f2f2"/><circle cx="451.3" cy="36.1" r="1.1" fill="#f2f2f2"/>
 <rect x="530" y="25" width="25" height="20" rx="3" fill="#27e07e"/>
 <path d="M542.5 41.5v-10M537.8 35.5l4.7-4.7 4.7 4.7" stroke="#0a0a0a" stroke-width="2.6" fill="none" stroke-linecap="round" stroke-linejoin="round"/>
 <rect x="623" y="26" width="5" height="17.5" rx="1.5" fill="#f7f7f7"/><rect x="632" y="26" width="5" height="17.5" rx="1.5" fill="#f7f7f7"/>
 <circle cx="713.5" cy="33.5" r="3.7" fill="#f2f2f2"/>
 <path d="M707.2 45.3v-2c0-2 1.7-3.6 3.8-3.6h5.5c2.1 0 3.8 1.6 3.8 3.6v2z" fill="#f2f2f2"/>
 <rect x="967.4" y="27.8" width="2.8" height="6" rx="1.4" fill="#f2f2f2"/>
 <rect x="1126" y="25.5" width="23" height="16.5" rx="3" fill="#f7f7f7"/>
 <rect x="1136.5" y="33.5" width="15" height="10.5" rx="3" fill="#0f0f0f" stroke="#f7f7f7" stroke-width="1.7"/>
 <circle cx="1265.5" cy="35" r="1.4" fill="#f2f2f2"/><circle cx="1271.5" cy="35" r="1.4" fill="#f2f2f2"/><circle cx="1277.5" cy="35" r="1.4" fill="#f2f2f2"/>
</svg>
<div class="t" style="left:359.5px;top:19px;font-size:12px;font-weight:bold;color:#bdbdbd">6</div>
<div class="zl" style="left:153px">Звук</div>
<div class="zl" style="left:240.5px">Видео</div>
<div class="zl" style="left:343px">Участники</div>
<div class="zl" style="left:450px">Чат</div>
<div class="zl" style="left:542px">Поделиться</div>
<div class="zl" style="left:629.5px">Пауза</div>
<div class="zl" style="left:718.5px">Компоновка</div>
<div class="zl" style="left:822px">Комментировать</div>
<div class="zl" style="left:969px">Дистанционное управление</div>
<div class="zl" style="left:1138.7px">Показать конференцию</div>
<div class="zl" style="left:1271.7px">Дополнительно</div>

<!-- banners -->
<div class="a" style="left:405px;top:75px;width:349px;height:25px;background:#23d056;border-radius:0 0 0 7px"></div>
<div class="a" style="left:753px;top:75px;width:280px;height:25px;background:#e2252b;border-radius:0 0 7px 0"></div>
<svg width="1600" height="110" style="left:0;top:0">
 <path d="M417 84.5l5-4.5 3.2 2.6-1.8 1.4 2.6 3.6 2.4.2-.3 1.6-3.4.1-2.8-3.3-1.8 1.5z" fill="#0b5a20"/>
 <path d="M735 81.5l6 2.2v3.6c0 3.2-2.6 5.6-6 6.7-3.4-1.1-6-3.5-6-6.7v-3.6z" fill="#0c5a22"/>
 <path d="M732.3 87.3l2 2 3.5-3.6" stroke="#23d056" stroke-width="1.4" fill="none"/>
 <rect x="762" y="82" width="8.5" height="8" rx="1" fill="#f6fbff"/>
</svg>
<div class="t" style="left:465.5px;top:82px;font-size:12px;font-weight:bold;color:#0d3d1b">Вы запустили демонстрацию экрана</div>
<div class="t" style="left:779px;top:82px;font-size:11.6px;font-weight:bold;color:#fff;letter-spacing:0">Остановить совместное использование</div>

<!-- ============ ZOOM GALLERY ============ -->
<div class="a" style="left:52px;top:101px;width:484px;height:647px;background:#15181b;box-shadow:0 2px 5px rgba(0,0,0,.25);border-radius:0 0 3px 3px"></div>
<div class="a" style="left:52px;top:101px;width:484px;height:27px;background:#0c0c0c"></div>
<svg width="600" height="140" style="left:0;top:0">
 <rect x="60.5" y="118.5" width="13" height="4" rx="1.5" fill="#cfcfcf"/>
 <rect x="89.5" y="112.5" width="12.5" height="9.5" rx="1" fill="#cfcfcf"/>
 <rect x="118.5" y="109" width="12.5" height="5" rx="1.5" fill="#cfcfcf"/>
 <rect x="118.5" y="117" width="12.5" height="5" rx="1.5" fill="#cfcfcf"/>
 <g fill="#3b8cf5"><circle cx="149.2" cy="110.5" r="2"/><circle cx="154.2" cy="110.5" r="2"/><circle cx="159.2" cy="110.5" r="2"/>
 <circle cx="149.2" cy="115.5" r="2"/><circle cx="154.2" cy="115.5" r="2"/><circle cx="159.2" cy="115.5" r="2"/>
 <circle cx="149.2" cy="120.5" r="2"/><circle cx="154.2" cy="120.5" r="2"/><circle cx="159.2" cy="120.5" r="2"/></g>
 <path d="M513 124.5l5.5-5.5M513.5 120v4.5h4.5M529.5 108.5l-5.5 5.5M529 113v-4.5h-4.5" stroke="#aaaaaa" stroke-width="1.3" fill="none"/>
</svg>
<div class="a" style="left:293px;top:241px;width:236px;height:133px;border:3px solid #2fe08a;border-radius:2px 8px 2px 2px;overflow:hidden;background:#4a2a18">
 <div class="a" style="left:0;top:0;width:230px;height:127px;overflow:hidden;filter:blur(1px)">
  <div class="a" style="left:0;top:0;width:230px;height:42px;background:linear-gradient(90deg,#3e2416 0%,#5a3420 18%,#6e4228 30%,#8a5030 42%,#a4602f 55%,#b06a38 75%,#a86838 85%)"></div>
  <div class="a" style="left:0;top:41px;width:230px;height:8px;background:#2a1a12"></div>
  <div class="a" style="left:0;top:49px;width:230px;height:78px;background:linear-gradient(180deg,#4a3020,#6a4a30 70%,#5a3a24)"></div>
  <div class="a" style="left:44px;top:0;width:1.5px;height:42px;background:#2a180c"></div>
  <div class="a" style="left:90px;top:0;width:1.5px;height:42px;background:#3a2010"></div>
  <div class="a" style="left:138px;top:0;width:1.5px;height:42px;background:#5a3018"></div>
  <div class="a" style="left:3px;top:56px;width:37px;height:37px;background:radial-gradient(ellipse 50% 40% at 55% 45%,#f0b090 0%,#d86040 40%,#8a2818 100%)"></div>
  <div class="a" style="left:35px;top:56px;width:24px;height:38px;background:linear-gradient(165deg,#c0e0f0 0%,#80b8e0 45%,#3a78c0 100%)"></div>
  <div class="a" style="left:59px;top:40px;width:133px;height:45px;background:#2a62c8"></div>
  <div class="a" style="left:130px;top:84px;width:62px;height:43px;background:#e8c83a"></div>
  <div class="a" style="left:189px;top:0;width:10px;height:127px;background:linear-gradient(90deg,#7a726a,#a09890,#8a827a)"></div>
  <div class="a" style="left:197px;top:0;width:33px;height:127px;background:linear-gradient(90deg,#d8e4e2,#f4fbfa 40%,#eef6f6)"></div>
  <!-- person -->
  <div class="a" style="left:60px;top:23px;width:76px;height:130px;border-radius:50% 50% 0 0 / 38% 38% 0 0;background:linear-gradient(90deg,#a89470,#d4c4a0 25%,#d8c8a4 70%,#e8dcc0)"></div>
  <div class="a" style="left:68px;top:50px;width:52px;height:57px;border-radius:14px 14px 24px 24px;background:linear-gradient(180deg,#d4aa94,#c9998a 60%,#b88676)"></div>
  <div class="a" style="left:67px;top:23px;width:58px;height:35px;border-radius:50% 50% 6px 6px / 70% 70% 6px 6px;background:linear-gradient(180deg,#dccca8,#cfba92)"></div>
  <div class="a" style="left:82px;top:61px;width:9px;height:4px;border-radius:2px;background:#5a4640"></div>
  <div class="a" style="left:104px;top:61px;width:9px;height:4px;border-radius:2px;background:#5a4640"></div>
  <div class="a" style="left:92px;top:89px;width:15px;height:3px;border-radius:2px;background:#a8706a"></div>
  <div class="a" style="left:112px;top:116px;width:50px;height:14px;border-radius:14px 14px 0 0;background:#ece8e6"></div>
 </div>
 <div class="a" style="left:2px;top:106px;width:92px;height:21px;background:rgba(30,26,24,.6)"></div>
 <div class="t" style="left:5px;top:110.5px;font-size:13px;color:#f2f2f2">Ірина Войтова</div>
</div>
<div class="bn" style="left:178px;top:299px">Захар  Бугай</div>
<div class="bn" style="left:178.5px;top:429px">Шигачов  Миха<i>...</i></div>
<div class="bn" style="left:411px;top:429px">Чумаченко  Єва</div>
<div class="bn" style="left:178.5px;top:560px">Броновський  С<i>...</i></div>
<div class="bn" style="left:412.5px;top:560px">Владислав  Тка<i>...</i></div>
<div class="pill" style="left:65px;top:350.5px;width:100px"><i class="mm"></i>Захар  Бугай</div>
<div class="pill" style="left:64.5px;top:481.5px;width:136px"><i class="mm"></i>Шигачов Михайло</div>
<div class="pill" style="left:297px;top:482px;width:120px"><i class="mm"></i>Чумаченко Єва</div>
<div class="pill" style="left:64.5px;top:613px;width:150px"><i class="mm"></i>Броновський Степан</div>
<div class="pill" style="left:297px;top:613px;width:128px;padding-left:4px">Владислав Ткаленко</div>

<div class="a" style="left:16px;top:805px;width:34px;height:34px;border-radius:50%;background:#23272a"></div>
<svg width="100" height="900" style="left:0;top:0" fill="none" stroke="#2fd07a" stroke-width="1.5" stroke-linejoin="round">
 <path d="M27 828l1-5 9-9 4 4-9 9zM35 816l4 4"/><path d="M26 830.5h14"/>
</svg>
</body></html>
